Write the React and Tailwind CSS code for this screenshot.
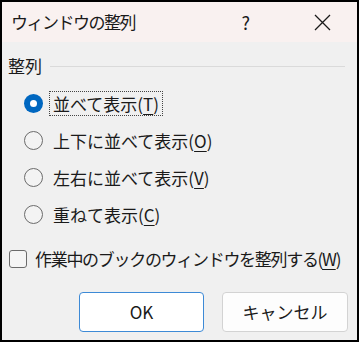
import React from 'react';

const font = { fontFamily: '"Noto Sans CJK JP", "Noto Sans", sans-serif' };

const Radio = ({ checked, label, hotkey, focused }) => (
    <div className="flex items-center h-[37px] pl-[22px]">
        {checked ? (
            <div className="w-[19px] h-[19px] rounded-full bg-[#0067c0] flex items-center justify-center">
                <div className="w-[7px] h-[7px] rounded-full bg-white" />
            </div>
        ) : (
            <div className="w-[19px] h-[19px] rounded-full border border-[#6b6b6b] bg-[#f3f3f3]" />
        )}
        <div
            className={`ml-[6px] px-[3px] h-[25px] flex items-center text-[17px] text-[#1a1a1a] whitespace-nowrap ${
                focused ? 'border border-dotted border-[#444]' : 'border border-transparent'
            }`}
        >
            <span>{label}(</span>
            <span className="underline underline-offset-[3px]">{hotkey}</span>
            <span>)</span>
        </div>
    </div>
);

export default function App() {
    return (
        <div className="w-[360px] h-[343px] bg-white" style={font}>
            <div className="w-[359px] h-[342px] border-2 border-black flex flex-col bg-[#f0f0f0]">
                {/* Title bar */}
                <div className="h-[40px] bg-[#f9f1f0] flex items-center pl-[9px] text-[#1a1a1a]">
                    <span className="text-[17px] tracking-[-1.5px]">ウィンドウの整列</span>
                    <span className="ml-auto mr-[64px] text-[18px]">?</span>
                    <svg width="17" height="17" viewBox="0 0 17 17" className="mr-[26px]">
                        <path d="M1 1 L16 16 M16 1 L1 16" stroke="#1a1a1a" strokeWidth="1.3" fill="none" />
                    </svg>
                </div>

                {/* Body */}
                <div className="flex-1 flex flex-col">
                    <div className="mt-[12px] h-[24px] flex items-center pl-[6px] pr-[12px]">
                        <span className="text-[17px] text-[#1a1a1a]">整列</span>
                        <div className="flex-1 h-px bg-[#dadada] ml-[8px]" />
                    </div>

                    <div className="mt-[7px] flex flex-col">
                        <Radio checked focused label="並べて表示" hotkey="T" />
                        <Radio label="上下に並べて表示" hotkey="O" />
                        <Radio label="左右に並べて表示" hotkey="V" />
                        <Radio label="重ねて表示" hotkey="C" />
                    </div>

                    <div className="mt-[7px] h-[37px] flex items-center pl-[7px]">
                        <div className="w-[18px] h-[18px] rounded-[3px] border border-[#6b6b6b] bg-[#f5f5f5]" />
                        <div className="ml-[8px] text-[17px] tracking-[-1.3px] text-[#1a1a1a] whitespace-nowrap">
                            <span>作業中のブックのウィンドウを整列する(</span>
                            <span className="underline underline-offset-[3px]">W</span>
                            <span>)</span>
                        </div>
                    </div>

                    <div className="mt-[15px] flex justify-end gap-[18px] pr-[9px]">
                        <button className="w-[125px] h-[40px] rounded-[4px] border border-[#3d8ad6] bg-white text-[17px] text-[#1a1a1a]">
                            OK
                        </button>
                        <button className="w-[126px] h-[40px] rounded-[4px] border border-[#d3d3d3] bg-[#fdfdfd] text-[17px] text-[#1a1a1a]">
                            キャンセル
                        </button>
                    </div>
                </div>
            </div>
        </div>
    );
}
